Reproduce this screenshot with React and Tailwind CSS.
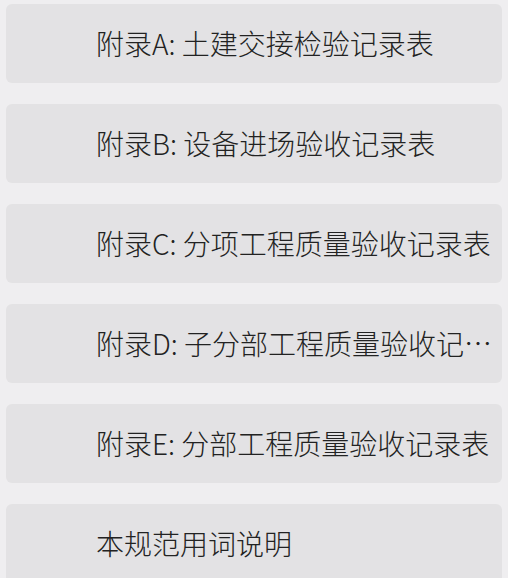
import React from 'react'

const items = [
    '附录A: 土建交接检验记录表',
    '附录B: 设备进场验收记录表',
    '附录C: 分项工程质量验收记录表',
    '附录D: 子分部工程质量验收记录表',
    '附录E: 分部工程质量验收记录表',
    '本规范用词说明',
]

export default function App() {
    return (
        <div
            className="w-[508px] h-[578px] overflow-hidden bg-[#efeef0] px-[6px] pt-[4px] flex flex-col gap-[21px]"
            style={{ fontFamily: '"Noto Sans CJK SC", "Noto Sans", sans-serif' }}
        >
            {items.map((t) => (
                <div
                    key={t}
                    className="shrink-0 h-[79px] rounded-[6px] bg-[#e3e2e4] flex items-center pl-[90px] pr-[8px]"
                >
                    <span className="truncate text-[28px] leading-[1.4] font-light text-[#222]">{t}</span>
                </div>
            ))}
        </div>
    )
}
